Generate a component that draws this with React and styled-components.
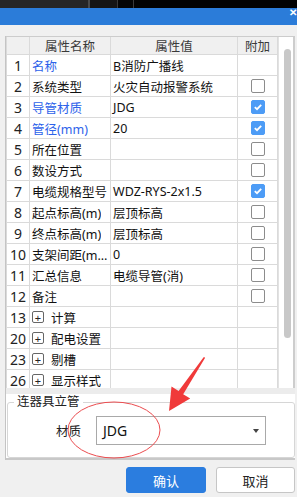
import React from 'react';
import styled, { createGlobalStyle } from 'styled-components';

const GlobalStyle = createGlobalStyle`
  html, body {
    margin: 0;
    padding: 0;
  }
  body {
    font-family: "Noto Sans", "Noto Sans CJK SC", sans-serif;
    background: #f0f0f0;
  }
`;

const rows = [
  { no: 1, name: '名称', value: 'B消防广播线', blue: true },
  { no: 2, name: '系统类型', value: '火灾自动报警系统', check: false },
  { no: 3, name: '导管材质', value: 'JDG', blue: true, check: true },
  { no: 4, name: '管径(mm)', value: '20', blue: true, check: true },
  { no: 5, name: '所在位置', check: false },
  { no: 6, name: '数设方式', check: false },
  { no: 7, name: '电缆规格型号', value: 'WDZ-RYS-2x1.5', check: true },
  { no: 8, name: '起点标高(m)', value: '层顶标高', check: false },
  { no: 9, name: '终点标高(m)', value: '层顶标高', check: false },
  { no: 10, name: '支架间距(mm)', value: '0', check: false },
  { no: 11, name: '汇总信息', value: '电缆导管(消)', check: false },
  { no: 12, name: '备注', check: false },
  { no: 13, name: '计算', group: true },
  { no: 20, name: '配电设置', group: true },
  { no: 23, name: '剔槽', group: true },
  { no: 26, name: '显示样式', group: true },
];

export default function App() {
  return (
    <Page>
      <GlobalStyle />
      <TopStrip>
        <StripPart $w={88} $c="#262626" />
        <StripPart $w={2} $c="#4a4a4a" />
        <StripPart $w={27} $c="#151515" />
        <StripPart $w={1} $c="#3a3a3a" />
        <StripPart $w={15} $c="#050505" />
        <StripPart $w={1} $c="#3a3a3a" />
        <StripPart $w={163} $c="#020202" />
      </TopStrip>
      <TitleBar>
        <Close>✕</Close>
      </TitleBar>
      <Spacer />

      <Panel>
        <TableArea>
          <Grid>
            <HeadCell />
            <HeadCell>属性名称</HeadCell>
            <HeadCell>属性值</HeadCell>
            <HeadCell>附加</HeadCell>
            {rows.map(r => (
              <React.Fragment key={r.no}>
                <NumCell>{r.no}</NumCell>
                <NameCell $blue={r.blue}>
                  {r.group && <Expander>+</Expander>}
                  <Ellipsis>{r.name}</Ellipsis>
                </NameCell>
                <ValueCell>{r.value}</ValueCell>
                <CheckCell>
                  {r.check !== undefined && (
                    <Box $on={r.check}>
                      {r.check && (
                        <svg width="10" height="10" viewBox="0 0 10 10">
                          <polyline
                            points="1.8,5.2 4,7.2 8.2,2.8"
                            fill="none"
                            stroke="#fff"
                            strokeWidth="1.8"
                          />
                        </svg>
                      )}
                    </Box>
                  )}
                </CheckCell>
              </React.Fragment>
            ))}
          </Grid>
          <ScrollTrack>
            <Thumb />
          </ScrollTrack>
        </TableArea>
        <Band />
        <GroupArea>
          <GroupBox>
            <Legend>连器具立管</Legend>
            <FieldRow>
              <FieldLabel>材质</FieldLabel>
              <Select>
                <span>JDG</span>
                <Caret />
              </Select>
            </FieldRow>
          </GroupBox>
        </GroupArea>
      </Panel>

      <Footer>
        <Button $primary>确认</Button>
        <Button>取消</Button>
      </Footer>

      <Overlay width="297" height="497" viewBox="0 0 297 497">
        <ellipse cx="114" cy="430" rx="46" ry="28" fill="none" stroke="#eb4d50" strokeWidth="1" />
        <polygon
          points="204.3,357 205,358 183.2,394.2 190.2,398.4 169,411 171.5,386.6 178.6,391 203.6,357.2"
          fill="#f03a3a"
        />
      </Overlay>
    </Page>
  );
}

const Page = styled.div`
  position: relative;
  width: 297px;
  height: 497px;
  overflow: hidden;
  background: #f0f0f0;
`;

const TopStrip = styled.div`
  display: flex;
  height: 8px;
`;

const StripPart = styled.div`
  flex: 0 0 ${p => p.$w}px;
  background: ${p => p.$c};
`;

const TitleBar = styled.div`
  display: flex;
  justify-content: flex-end;
  align-items: flex-start;
  height: 17px;
  background: #2b7cd9;
  overflow: hidden;
`;

const Close = styled.span`
  color: #fff;
  font-size: 10px;
  font-weight: bold;
  line-height: 8px;
  margin-right: 0;
`;

const Spacer = styled.div`
  height: 11px;
`;

const Panel = styled.div`
  margin-left: 5px;
  width: 290px;
  border-left: 1px solid #c4c4c4;
  box-sizing: border-box;
`;

const TableArea = styled.div`
  display: flex;
  height: 351px;
  border-top: 1px solid #cccccc;
  overflow: hidden;
`;

const Grid = styled.div`
  display: grid;
  grid-template-columns: 23px 81px 127px 40px;
  grid-auto-rows: 21px;
  grid-template-rows: 18px;
  border-left: 1px solid #dadada;
  background: #fff;
  align-content: start;
`;

const Cell = styled.div`
  box-sizing: border-box;
  border-right: 1px solid #dadada;
  border-bottom: 1px solid #dadada;
  display: flex;
  align-items: center;
  font-size: 12.5px;
  color: #111;
  white-space: nowrap;
  overflow: hidden;
`;

const HeadCell = styled(Cell)`
  justify-content: center;
  background: #f0f0f0;
  color: #3a3a3a;
`;

const NumCell = styled(Cell)`
  justify-content: center;
  font-size: 14px;
  color: #222;
`;

const NameCell = styled(Cell)`
  padding-left: 2px;
  color: ${p => (p.$blue ? '#2d62ea' : '#111')};
`;

const Ellipsis = styled.span`
  overflow: hidden;
  text-overflow: ellipsis;
`;

const ValueCell = styled(Cell)`
  padding-left: 2px;
`;

const CheckCell = styled(Cell)`
  justify-content: center;
`;

const Box = styled.span`
  box-sizing: border-box;
  width: 14px;
  height: 14px;
  border-radius: 2px;
  border: 1px solid ${p => (p.$on ? '#4d9cf6' : '#8c8c8c')};
  background: ${p => (p.$on ? '#4d9cf6' : '#fff')};
  display: flex;
  align-items: center;
  justify-content: center;
`;

const Expander = styled.span`
  box-sizing: border-box;
  width: 12px;
  height: 12px;
  border: 1px solid #666;
  border-radius: 2px;
  display: flex;
  align-items: center;
  justify-content: center;
  font-size: 11px;
  line-height: 1;
  color: #222;
  margin-right: 7px;
  flex: none;
`;

const ScrollTrack = styled.div`
  width: 15px;
  background: #fff;
  border-left: 1px solid #e2e2e2;
  border-right: 2px solid #cdcdcd;
  padding-top: 12px;
  padding-left: 5px;
  box-sizing: content-box;
`;

const Thumb = styled.div`
  width: 7px;
  height: 289px;
  border-radius: 4px;
  background: #c8c8c8;
`;

const Band = styled.div`
  height: 6px;
  background: #ececec;
`;

const GroupArea = styled.div`
  background: #fff;
  padding: 1px 0 0 1px;
  border-bottom: 2px solid #c8c8c8;
`;

const GroupBox = styled.fieldset`
  margin: 0;
  padding: 0;
  height: 63px;
  box-sizing: border-box;
  border: 1px solid #d6d6d6;
  border-radius: 3px;
  min-inline-size: 0;
`;

const Legend = styled.legend`
  margin-left: 6px;
  padding: 0 3px;
  font-size: 12.5px;
  color: #222;
  line-height: 14px;
`;

const FieldRow = styled.div`
  display: flex;
  align-items: center;
  padding-left: 48px;
  margin-top: 7px;
`;

const FieldLabel = styled.span`
  font-size: 12.5px;
  color: #222;
  width: 40px;
`;

const Select = styled.div`
  box-sizing: border-box;
  width: 170px;
  height: 29px;
  border: 1px solid #a9a9a9;
  display: flex;
  align-items: center;
  justify-content: space-between;
  padding: 0 6px 0 6px;
  font-size: 14px;
  color: #111;
`;

const Caret = styled.span`
  width: 0;
  height: 0;
  border-left: 3.5px solid transparent;
  border-right: 3.5px solid transparent;
  border-top: 4px solid #444;
`;

const Footer = styled.div`
  display: flex;
  justify-content: flex-end;
  gap: 10px;
  padding: 7px 2px 0 0;
`;

const Button = styled.div`
  box-sizing: border-box;
  width: ${p => (p.$primary ? 80 : 79)}px;
  height: 26px;
  border-radius: 3px;
  display: flex;
  align-items: center;
  justify-content: center;
  font-size: 13px;
  color: ${p => (p.$primary ? '#fff' : '#222')};
  background: ${p => (p.$primary ? '#2b7ddf' : '#fff')};
  border: 1px solid ${p => (p.$primary ? '#2b7ddf' : '#c6c6c6')};
`;

const Overlay = styled.svg`
  position: absolute;
  top: 0;
  left: 0;
  pointer-events: none;
`;
